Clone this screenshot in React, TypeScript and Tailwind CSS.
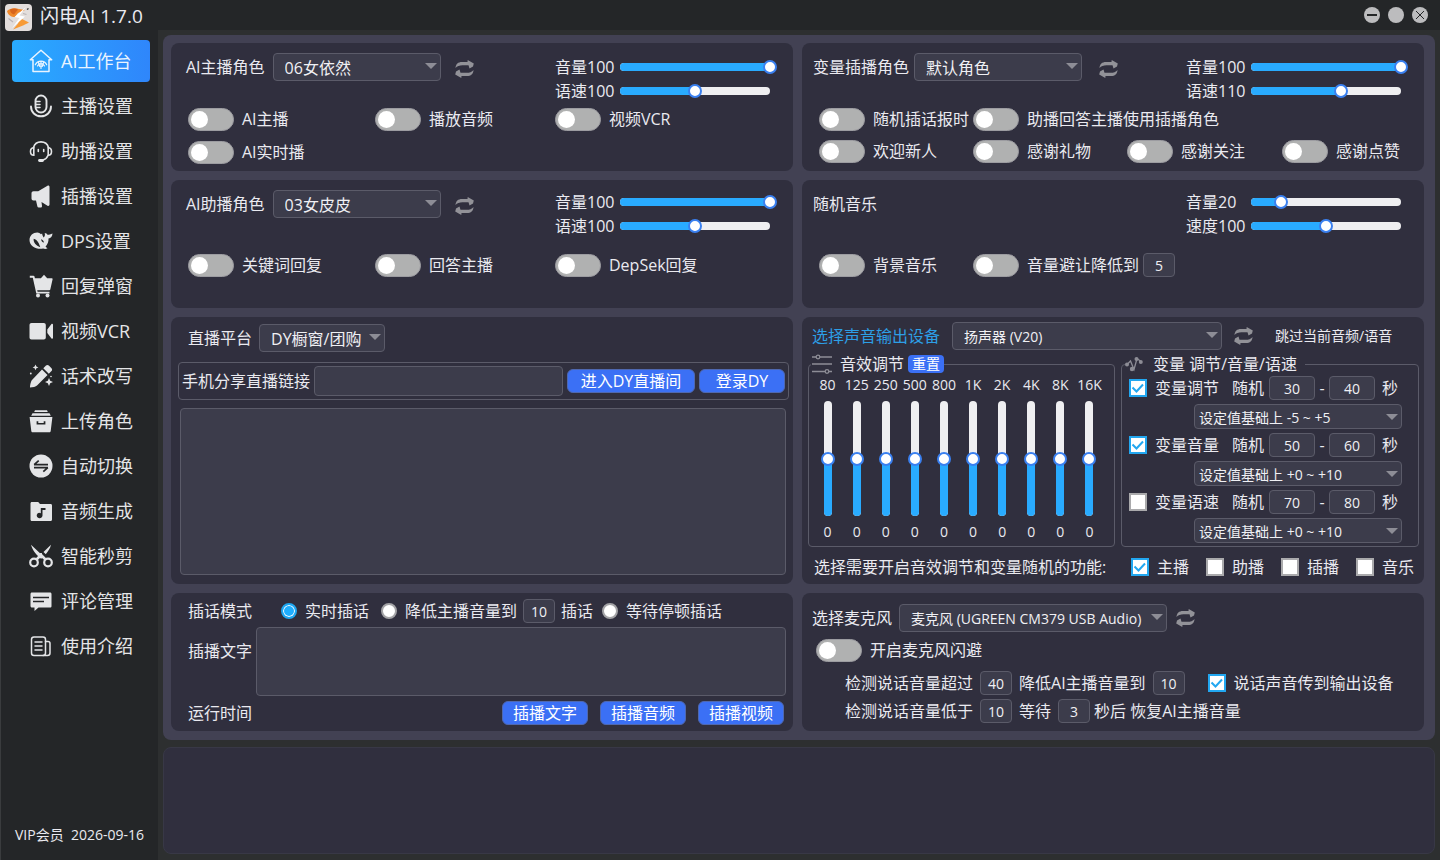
import { useId, useState } from 'react';
import type { ReactNode } from 'react';

const NAV: { name: string; icon: ReactNode }[] = [
  {
    name: 'AI工作台',
    icon: (
      <g fill="none" stroke="currentColor" strokeWidth="1.5" strokeLinejoin="round" strokeLinecap="round">
        <path d="M4 10.8H1.3L12 1.2l10.700 9.600H20V22.500H4z" />
        <path d="M6.300 15.800a6.200 6.200 0 0 1 11.400 0M8.500 17a3.800 3.800 0 0 1 7 0M12 12v7.500M9.300 13l1.500 4.500M14.700 13l-1.500 4.500" strokeWidth="1.200" />
      </g>
    ),
  },
  {
    name: '主播设置',
    icon: (
      <g fill="none" stroke="currentColor" strokeWidth="1.900" strokeLinecap="round">
        <rect x="6.500" y="1.500" width="11" height="17" rx="5.500" />
        <path d="M7 7.500h4M7 10.500h4M7 13.500h4" strokeWidth="1.500" />
        <path d="M2 12.500c0 5.500 4.300 9.800 10 9.800s10-4.300 10-9.800" />
      </g>
    ),
  },
  {
    name: '助播设置',
    icon: (
      <g fill="none" stroke="currentColor" strokeWidth="1.600" strokeLinecap="round">
        <path d="M4.500 8.500a7.800 7.800 0 0 1 15 0" />
        <path d="M4.800 8.800v7.400C2.800 16.200 1.500 15 1.500 12.500s1.300-3.700 3.300-3.700zM19.200 8.800v7.400c2 0 3.300-1.200 3.300-3.700s-1.300-3.700-3.300-3.700z" />
        <path d="M9.300 10.500v2M14.700 10.500v2" />
        <path d="M19 16.500c-1 2.500-2.800 4-5 4.600" />
        <path d="M10.500 21.500h3" strokeWidth="2.800" />
      </g>
    ),
  },
  {
    name: '插播设置',
    icon: (
      <path
        fill="currentColor"
        d="M2.500 9.300c0-1.300.8-2 2-2h4.700L18.500 1.800c1-.6 2 0 2 1.200v17.500c0 1.200-1 1.800-2 1.200L12.500 18l.5 4c.1.900-.4 1.500-1.200 1.500H9.700c-.7 0-1.100-.4-1.300-1.100L7 16.500H4.500c-1.200 0-2-.8-2-2z"
      />
    ),
  },
  {
    name: 'DPS设置',
    icon: (
      <path
        fill="currentColor"
        fillRule="evenodd"
        d="M.5 11C.5 6.500 4 3.500 8.300 3.500c1.700 0 2.500.8 3.600 1.700l1.200-.7c.2 1.500.6 2.600 1.600 3.900 1.200-1.200 1.500-2.700 1-4.400 1.400.2 2.200.9 2.800 1.700 1.500-.1 3.200-.4 5-1.300-.2 3-1.700 4.700-4 5.200.2 3.100-.8 5.700-3 8.100l2 1.600c-1.300.8-2.900.9-4.400.2C8.200 21 .5 17.500.5 11zm4.200-1.300c-.7 3.600 2.300 6.600 6.600 8.500-.9-2-1.600-5-4-7.100-.8-.7-1.700-1.100-2.600-1.400zm7.300.5c.2 1.500 1.300 3.100 3 3.300-.2-1.600-1.300-2.900-3-3.300z"
      />
    ),
  },
  {
    name: '回复弹窗',
    icon: (
      <g fill="currentColor">
        <path d="M.8 1.800h3.700c.5 0 .9.300 1 .8l.4 1.600h6L15 .8l3.200 3.400h4.500c.6 0 1 .5.9 1.100l-2.300 10.200c-.1.500-.5.800-1 .8H8.200l.4 1.400h11.900v1.700H7.300L3.800 3.700H.8z" />
        <circle cx="9" cy="21.500" r="2" />
        <circle cx="18.500" cy="21.500" r="2" />
      </g>
    ),
  },
  {
    name: '视频VCR',
    icon: <path fill="currentColor" d="M2.500 4h12.300c1.200 0 2 .8 2 2v12.500c0 1.200-.8 2-2 2H2.500c-1.200 0-2-.8-2-2V6c0-1.200.8-2 2-2zM18.300 10.500 22.500 5c.5-.6 1.500-.3 1.500.5v13.500c0 .8-1 1.100-1.500.5l-4.200-5.500z" />,
  },
  {
    name: '话术改写',
    icon: (
      <g fill="currentColor">
        <path d="M13 5.500 18.500 11 8 21.500c-1 1-4.500 2-7 2 0-2.500 1-6.500 2-7.500zM14.300 4.200 17 1.500c.8-.8 2-.8 2.800 0l2.700 2.700c.8.800.8 2 0 2.800l-2.700 2.700z" />
        <path d="m6.500.5.9 2 2 .9-2 .9-.9 2-.9-2-2-.9 2-.9zM20 14l1.200 2.800L24 18l-2.800 1.200L20 22l-1.200-2.800L16 18l2.800-1.200z" />
        <circle cx="1.800" cy="9.500" r=".9" />
        <circle cx="22" cy="12.500" r=".8" />
      </g>
    ),
  },
  {
    name: '上传角色',
    icon: (
      <g fill="currentColor">
        <path d="M6 1.300h12l.8 1.600H5.200zM3.500 4.200h17l1.300 2.600H2.200z" />
        <path fillRule="evenodd" d="M.6 8h22.800l-1.700 14c-.1.900-.6 1.300-1.400 1.300H3.700c-.8 0-1.300-.4-1.400-1.300zm7 4.300v3.200h8.800v-3.200h-1.700v1.600H9.300v-1.600z" />
      </g>
    ),
  },
  {
    name: '自动切换',
    icon: (
      <>
        <circle cx="12" cy="12" r="11.500" fill="currentColor" />
        <path d="M5 10.700h14M9.700 6.700 5.200 10.700M5 13.700h14M14.300 17.700l4.500-4" fill="none" stroke="#242628" strokeWidth="1.700" />
      </>
    ),
  },
  {
    name: '音频生成',
    icon: (
      <>
        <path fill="currentColor" d="M1.500 4.500c0-.9.500-1.500 1.400-1.500h6.300l1.800 2h10.600c.9 0 1.400.6 1.400 1.500v14c0 .9-.5 1.500-1.400 1.500H2.900c-.9 0-1.400-.6-1.400-1.500z" />
        <path fill="#242628" d="M11.800 9h4.700v2h-3v5.500a2.900 2.600 0 1 1-1.700-2.300z" />
      </>
    ),
  },
  {
    name: '智能秒剪',
    icon: (
      <g fill="none" stroke="currentColor" strokeWidth="2.200">
        <circle cx="5" cy="18.500" r="3.800" />
        <circle cx="19" cy="18.500" r="3.800" />
        <path d="M7.500 15.500 13 10M16.500 15.500 11 10" strokeWidth="2.600" />
        <path d="M2 .8 15 13l-3 1.800C7.500 11 3.500 6.500 2 .8zM22 .8 14.500 8l2.300 2.200C19 7.500 21.200 4.500 22 .8z" fill="currentColor" stroke="none" />
      </g>
    ),
  },
  {
    name: '评论管理',
    icon: (
      <>
        <path fill="currentColor" d="M3 3.500h18c1 0 1.500.6 1.500 1.500v12c0 1-.5 1.500-1.500 1.500H9.500L5.500 22v-3.500H3c-1 0-1.500-.6-1.500-1.500V5c0-.9.500-1.500 1.500-1.500z" />
        <path d="M4 8.500h16M4 12.500h11" stroke="#242628" strokeWidth="1.700" />
      </>
    ),
  },
  {
    name: '使用介绍',
    icon: (
      <g fill="none" stroke="currentColor" strokeWidth="1.500" strokeLinecap="round">
        <rect x="2.500" y="3" width="14" height="18.500" rx="2.500" />
        <path d="M6 8h7M6 12h7M6 16h7M16.500 7.500h2.500c1.300 0 2 .7 2 2v9.500c0 1.500-1 2.500-2.500 2.500H14" />
      </g>
    ),
  },
];

const BANDS = ['80', '125', '250', '500', '800', '1K', '2K', '4K', '8K', '16K'];

const VARIABLES = [
  { name: '变量调节', on: true, from: 30, to: 40, range: '设定值基础上 -5 ~ +5' },
  { name: '变量音量', on: true, from: 50, to: 60, range: '设定值基础上 +0 ~ +10' },
  { name: '变量语速', on: false, from: 70, to: 80, range: '设定值基础上 +0 ~ +10' },
];

const TARGETS = [
  { name: '主播', on: true },
  { name: '助播', on: false },
  { name: '插播', on: false },
  { name: '音乐', on: false },
];

function Panel({ className = '', children }: { className?: string; children: ReactNode }) {
  return <section className={`min-w-0 rounded-lg bg-[#302f3e] ${className}`}>{children}</section>;
}

function Toggle({ label, className = '' }: { label: string; className?: string }) {
  return (
    <label className={`flex items-center gap-2 ${className}`}>
      <input
        type="checkbox"
        role="switch"
        className="h-[23px] w-[46px] shrink-0 appearance-none rounded-full border border-[#9c9ca1] bg-[#b0b1b1] p-0.5 before:block before:size-[17px] before:rounded-full before:bg-white checked:bg-[#29abff] checked:before:ml-[23px]"
      />
      {label}
    </label>
  );
}

function Check({ label, defaultChecked }: { label: string; defaultChecked?: boolean }) {
  return (
    <label className="flex items-center gap-2">
      <span className="relative size-[18px] shrink-0">
        <input
          type="checkbox"
          defaultChecked={defaultChecked}
          className="peer block size-[18px] appearance-none border-2 border-[#aaaaac] bg-white checked:border-[#22a7f0]"
        />
        <svg viewBox="0 0 18 18" className="pointer-events-none absolute inset-0 hidden size-[18px] peer-checked:block">
          <path d="M3.500 8.500 7.500 12.500 14 5.500" fill="none" stroke="#22a7f0" strokeWidth="2" />
        </svg>
      </span>
      {label}
    </label>
  );
}

function Radio({ label, defaultChecked }: { label: string; defaultChecked?: boolean }) {
  return (
    <label className="flex items-center gap-2">
      <input
        type="radio"
        name="insert-mode"
        defaultChecked={defaultChecked}
        className="size-4 shrink-0 appearance-none rounded-full border-2 border-[#a3a3a6] bg-white checked:border-[#1ea6f0] checked:bg-[#1eaeff] checked:shadow-[inset_0_0_0_1px_#fff]"
      />
      {label}
    </label>
  );
}

type SelectProps = {
  id?: string;
  label?: string;
  value: string;
  className?: string;
  small?: boolean;
  tight?: boolean;
};

function Select({ id, label, value, className = '', small = false, tight = false }: SelectProps) {
  return (
    <span className={`relative block shrink-0 ${className}`}>
      <select
        id={id}
        aria-label={label}
        className={`block w-full appearance-none rounded border border-[#5b5b69] bg-[#3c3c4b] pt-0.5 text-[#f0f0f4] ${small ? 'text-sm' : 'text-base'} ${tight ? 'h-[25px] pl-1' : 'h-7 pl-[11px]'}`}
      >
        <option>{value}</option>
      </select>
      <svg viewBox="0 0 12 6" className="pointer-events-none absolute top-2.5 right-1 h-1.5 w-3">
        <path d="M0 0h12L6 6z" fill="#8d8d96" />
      </svg>
    </span>
  );
}

function NumberBox({ value, wide = false, label }: { value: number; wide?: boolean; label?: string }) {
  return (
    <input
      type="text"
      aria-label={label}
      defaultValue={value}
      className={`h-6 shrink-0 rounded border border-[#5b5b69] bg-[#3c3c4b] text-center text-sm text-[#f0f0f4] ${wide ? 'w-[46px]' : 'w-8'}`}
    />
  );
}

function Refresh({ className = '' }: { className?: string }) {
  return (
    <button type="button" aria-label="刷新" className={`shrink-0 ${className}`}>
      <svg viewBox="0 0 19 18" className="h-[18px] w-[19px]" fill="#929298">
        <path d="M.5 8C.8 4 3 2 7 2h5.500L12.700 0 18.800 3.500 18 6.500 14.500 8.500 13.500 5.200H7.500C4.500 5.200 2 6 .5 8z" />
        <path d="M.5 8C.8 4 3 2 7 2h5.500L12.700 0 18.800 3.500 18 6.500 14.500 8.500 13.500 5.200H7.500C4.500 5.200 2 6 .5 8z" transform="rotate(180 9.500 9)" />
      </svg>
    </button>
  );
}

function Slider({ label, initial, min = 0, max = 100 }: { label: string; initial: number; min?: number; max?: number }) {
  const [value, setValue] = useState(initial);
  const id = useId();

  return (
    <div className="flex h-6 items-center">
      <label htmlFor={id} className="w-[65px]">
        {label}
        {value}
      </label>
      <div className="relative h-2 w-[150px] rounded-full bg-[#efeff1]">
        <div className="h-2 rounded-full bg-[#29abff]" style={{ width: `${((value - min) / (max - min)) * 100}%` }} />
        <input
          id={id}
          type="range"
          min={min}
          max={max}
          value={value}
          onChange={(e) => setValue(Number(e.target.value))}
          className="absolute -top-[3px] -left-[7px] h-3.5 w-[164px] appearance-none bg-transparent [&::-webkit-slider-thumb]:size-3.5 [&::-webkit-slider-thumb]:appearance-none [&::-webkit-slider-thumb]:rounded-full [&::-webkit-slider-thumb]:border-2 [&::-webkit-slider-thumb]:border-[#3a80f0] [&::-webkit-slider-thumb]:bg-white"
        />
      </div>
    </div>
  );
}

function Band({ name }: { name: string }) {
  const [gain, setGain] = useState(0);
  const id = useId();

  return (
    <div className="flex flex-col items-center text-sm">
      <label htmlFor={id} className="leading-[22px]">{name}</label>
      <div className="relative mt-[5px] flex h-[115px] w-2 flex-col justify-end rounded-full bg-[#efeff1]">
        <div className="w-2 rounded-full bg-[#29abff]" style={{ height: `${((gain + 12) / 24) * 100}%` }} />
        <input
          id={id}
          type="range"
          min={-12}
          max={12}
          value={gain}
          onChange={(e) => setGain(Number(e.target.value))}
          className="absolute -top-[7px] -left-[3px] h-[129px] w-3.5 appearance-none bg-transparent [direction:rtl] [writing-mode:vertical-lr] [&::-webkit-slider-thumb]:size-3.5 [&::-webkit-slider-thumb]:appearance-none [&::-webkit-slider-thumb]:rounded-full [&::-webkit-slider-thumb]:border-2 [&::-webkit-slider-thumb]:border-[#3a80f0] [&::-webkit-slider-thumb]:bg-white"
        />
      </div>
      <output htmlFor={id} className="mt-1 leading-6">{gain}</output>
    </div>
  );
}

function BlueButton({ children, className = 'w-[86px]' }: { children: ReactNode; className?: string }) {
  return (
    <button type="button" className={`h-6 shrink-0 rounded-md border border-[#4f68b0] bg-[#3b70f5] leading-none text-white ${className}`}>
      {children}
    </button>
  );
}

function Sidebar() {
  const [active, setActive] = useState('AI工作台');

  return (
    <aside className="flex w-[158px] shrink-0 flex-col border-l border-[#3a3c3e] pt-1">
      <div className="flex items-start gap-2 pl-1">
        <svg viewBox="0 0 27 27" className="size-[27px] shrink-0">
          <rect width="27" height="27" rx="4" fill="#e3dedc" />
          <path d="M2 7c3-3 8-3.500 12-2l6 1-7 3-3 4C6 13 3 11 2 7z" fill="#f0892b" />
          <path d="M5 5.500c3-1.500 6-1 8 0l-4 5C6.500 10 5 8 5 5.500z" fill="#d8651c" />
          <path d="M15 14l9 4.500-6 3-10 4 5-6z" fill="#f79a35" />
          <path d="M21 3 9.500 13l5 1L7 24l13-11.500-5.500-1z" fill="#fff" />
          <path d="M3.500 14.500 8 18M18 9.500l3.500 1" stroke="#b9b3b5" strokeWidth="1.200" />
          <path d="M22 5.500l1.500-1" stroke="#333" strokeWidth="1.300" />
        </svg>
        <h1 className="text-[19px] leading-6 whitespace-nowrap">闪电AI 1.7.0</h1>
      </div>

      <nav className="mt-[9px] flex flex-col gap-[3px] pr-2 pl-[11px]">
        {NAV.map((item) => (
          <button
            key={item.name}
            type="button"
            onClick={() => setActive(item.name)}
            className={`flex h-[42px] items-center gap-2 rounded pl-[17px] text-lg whitespace-nowrap ${item.name === active ? 'bg-linear-to-r from-[#29abff] to-[#2f86fb] text-[#e9f4ff]' : 'text-[#e4e5e7]'}`}
          >
            <svg viewBox="0 0 24 24" className="size-6 shrink-0">{item.icon}</svg>
            {item.name}
          </button>
        ))}
      </nav>

      <p className="mt-auto pb-[13px] pl-3.5 text-sm leading-6 whitespace-pre">VIP会员  2026-09-16</p>
    </aside>
  );
}

function WindowControls() {
  return (
    <header className="flex h-[30px] shrink-0 items-center justify-end gap-2 pr-3">
      <button type="button" aria-label="最小化">
        <svg viewBox="0 0 16 16" className="size-4">
          <circle cx="8" cy="8" r="8" fill="#bcbcbe" />
          <path d="M3 8h10" stroke="#242628" strokeWidth="2" />
        </svg>
      </button>
      <button type="button" aria-label="最大化" className="size-4 rounded-full bg-[#bcbcbe]" />
      <button type="button" aria-label="关闭">
        <svg viewBox="0 0 16 16" className="size-4">
          <circle cx="8" cy="8" r="8" fill="#bcbcbe" />
          <path d="m4 4 8 8M12 4l-8 8" stroke="#242628" strokeWidth="1" />
        </svg>
      </button>
    </header>
  );
}

function SoundPanel() {
  return (
    <Panel className="pt-[5px] pr-[5px] pb-[5px] pl-1.5">
      <div className="flex items-center pl-1">
        <label htmlFor="output" className="text-[#2d9fe6]">选择声音输出设备</label>
        <Select id="output" value="扬声器 (V20)" small className="mx-3 w-[270px]" />
        <Refresh />
        <button type="button" className="ml-[22px] text-sm">跳过当前音频/语音</button>
      </div>

      <div className="mt-1 grid grid-cols-[307fr_298fr] gap-1.5">
        <fieldset className="min-w-0 rounded border border-[#5b5b69] pr-[10px] pl-1">
          <legend className="-ml-0.5 flex h-5 items-center pl-px">
            <svg viewBox="0 0 20 20" className="h-5 w-5" fill="none" stroke="#8d8d96" strokeWidth="1.300">
              <path d="M0 3h4M8 3h12M0 10h20M0 17.500h13M17 17.500h3" />
              <circle cx="6" cy="3" r="1.800" />
              <circle cx="15" cy="17.500" r="1.800" />
            </svg>
            <span className="ml-2">音效调节</span>
            <button type="button" className="ml-1 h-[18px] w-9 rounded bg-[#3b70f5] text-sm leading-none text-white">重置</button>
          </legend>
          <div className="grid grid-cols-10">
            {BANDS.map((name) => (
              <Band key={name} name={name} />
            ))}
          </div>
        </fieldset>

        <fieldset className="min-w-0 rounded border border-[#5b5b69] pr-4 pb-[3px] pl-[7px]">
          <legend className="-ml-1 flex h-5 items-center pr-2">
            <svg viewBox="0 0 18 16" className="h-4 w-[18px]" fill="#8d8d96">
              <path d="M2 8.500 5.500 5 9 13.500 12 2.500 16 5.500" fill="none" stroke="#8d8d96" strokeWidth="1.300" />
              <circle cx="2" cy="8.500" r="2" />
              <circle cx="7" cy="13" r="2.200" />
              <circle cx="11.500" cy="3" r="2" />
              <circle cx="15.800" cy="6" r="2" />
            </svg>
            <span className="ml-2.5">变量 调节/音量/语速</span>
          </legend>
          <div className="flex flex-col gap-1 pt-0.5">
            {VARIABLES.map((v) => (
              <div key={v.name} className="flex flex-col gap-1">
                <div className="flex h-6 items-center">
                  <Check label={v.name} defaultChecked={v.on} />
                  <span className="mr-[5px] ml-[13px]">随机</span>
                  <NumberBox wide value={v.from} label={`${v.name}最小秒数`} />
                  <span className="w-3.5 text-center">-</span>
                  <NumberBox wide value={v.to} label={`${v.name}最大秒数`} />
                  <span className="ml-[7px]">秒</span>
                </div>
                <div className="flex justify-end">
                  <Select label={`${v.name}范围`} value={v.range} small tight className="w-[208px]" />
                </div>
              </div>
            ))}
          </div>
        </fieldset>
      </div>

      <div className="mt-2 flex items-center justify-between pr-[5px] pl-1.5">
        <span>选择需要开启音效调节和变量随机的功能:</span>
        <div className="flex gap-[17px]">
          {TARGETS.map((t) => (
            <Check key={t.name} label={t.name} defaultChecked={t.on} />
          ))}
        </div>
      </div>
    </Panel>
  );
}

export default function App() {
  return (
    <div className="flex min-h-screen bg-[#242628] font-['Open_Sans','Noto_Sans_CJK_SC',sans-serif] text-base leading-6 whitespace-nowrap text-[#eaeaf0]">
      <Sidebar />

      <div className="flex min-w-0 flex-1 flex-col">
        <WindowControls />

        <main className="flex flex-1 flex-col gap-[7px] bg-[#2d2f30] px-[5px] pt-[5px] pb-1.5">
          <div className="grid grid-cols-2 gap-[9px] rounded-lg bg-[#424153] pt-2 pr-[11px] pb-[9px] pl-2">
            {/* AI anchor */}
            <Panel className="pt-2.5 pb-[7px]">
              <div className="flex items-start pr-[23px] pl-[15px]">
                <label htmlFor="anchor" className="pt-0.5">AI主播角色</label>
                <Select id="anchor" value="06女依然" className="mr-3.5 ml-2 w-[168px]" />
                <Refresh className="pt-[7px]" />
                <div className="ml-auto pt-0.5">
                  <Slider label="音量" initial={100} />
                  <Slider label="语速" initial={100} min={50} max={150} />
                </div>
              </div>
              <div className="mt-1 grid grid-cols-[187fr_180fr_238fr] gap-y-[9px] pl-[17px]">
                <Toggle label="AI主播" />
                <Toggle label="播放音频" />
                <Toggle label="视频VCR" />
                <Toggle label="AI实时播" />
              </div>
            </Panel>

            {/* Interjection voice */}
            <Panel className="pt-2.5 pb-[7px]">
              <div className="flex items-start pr-[23px] pl-[11px]">
                <label htmlFor="interject" className="pt-0.5">变量插播角色</label>
                <Select id="interject" value="默认角色" className="mr-[17px] ml-[5px] w-[168px]" />
                <Refresh className="pt-[7px]" />
                <div className="ml-auto pt-0.5">
                  <Slider label="音量" initial={100} />
                  <Slider label="语速" initial={110} min={50} max={150} />
                </div>
              </div>
              <div className="mt-1 grid grid-cols-[154fr_154fr_155fr_142fr] gap-y-2 pl-[17px]">
                <Toggle label="随机插话报时" />
                <Toggle label="助播回答主播使用插播角色" className="col-span-3" />
                <Toggle label="欢迎新人" />
                <Toggle label="感谢礼物" />
                <Toggle label="感谢关注" />
                <Toggle label="感谢点赞" />
              </div>
            </Panel>

            {/* AI assistant */}
            <Panel className="pt-2.5 pb-[31px]">
              <div className="flex items-start pr-[23px] pl-[15px]">
                <label htmlFor="assistant" className="pt-0.5">AI助播角色</label>
                <Select id="assistant" value="03女皮皮" className="mr-3.5 ml-2 w-[168px]" />
                <Refresh className="pt-[7px]" />
                <div className="ml-auto">
                  <Slider label="音量" initial={100} />
                  <Slider label="语速" initial={100} min={50} max={150} />
                </div>
              </div>
              <div className="mt-[15px] grid grid-cols-[187fr_180fr_238fr] pl-[17px]">
                <Toggle label="关键词回复" />
                <Toggle label="回答主播" />
                <Toggle label="DepSek回复" />
              </div>
            </Panel>

            {/* Music */}
            <Panel className="pt-2.5 pb-[31px]">
              <div className="flex items-start justify-between pr-[23px] pl-[11px]">
                <h2 className="pt-0.5">随机音乐</h2>
                <div>
                  <Slider label="音量" initial={20} />
                  <Slider label="速度" initial={100} min={50} max={150} />
                </div>
              </div>
              <div className="mt-[15px] grid grid-cols-[154fr_451fr] pl-[17px]">
                <Toggle label="背景音乐" />
                <div className="flex items-center gap-1">
                  <Toggle label="音量避让降低到" />
                  <NumberBox value={5} label="避让音量" />
                </div>
              </div>
            </Panel>

            {/* Live platform */}
            <Panel className="flex flex-col pt-[7px] pr-1 pb-[9px] pl-[7px]">
              <div className="flex items-center gap-[7px] pl-2.5">
                <label htmlFor="platform">直播平台</label>
                <Select id="platform" value="DY橱窗/团购" className="w-[126px]" />
              </div>
              <div className="mt-2.5 flex items-center gap-1 rounded border border-[#5b5b69] p-[3px]">
                <label htmlFor="link">手机分享直播链接</label>
                <input id="link" type="text" className="h-[30px] min-w-0 flex-1 rounded border border-[#5b5b69] bg-[#3c3c4b] px-2" />
                <BlueButton className="w-32">进入DY直播间</BlueButton>
                <BlueButton>登录DY</BlueButton>
              </div>
              <textarea aria-label="直播消息" className="mt-2 mr-[3px] ml-0.5 min-h-40 flex-1 resize-none rounded border border-[#5b5b69] bg-[#3c3c4b] p-2" />
            </Panel>

            <SoundPanel />

            {/* Insert mode */}
            <Panel className="pt-1.5 pr-[7px] pb-1.5 pl-[17px]">
              <div className="flex items-center">
                <span>插话模式</span>
                <div className="ml-[29px] flex items-center gap-3">
                  <Radio label="实时插话" defaultChecked />
                  <Radio label="降低主播音量到" />
                </div>
                <label className="mr-[9px] ml-1.5 flex items-center gap-1.5">
                  <NumberBox value={10} />
                  插话
                </label>
                <Radio label="等待停顿插话" />
              </div>
              <div className="mt-1 flex gap-1">
                <label htmlFor="insert-text" className="pt-3">插播文字</label>
                <textarea id="insert-text" className="h-[69px] min-w-0 flex-1 resize-none rounded border border-[#5b5b69] bg-[#3c3c4b] p-2" />
              </div>
              <div className="mt-[5px] flex items-center gap-3 pr-0.5">
                <span className="mr-auto">运行时间</span>
                <BlueButton>插播文字</BlueButton>
                <BlueButton>插播音频</BlueButton>
                <BlueButton>插播视频</BlueButton>
              </div>
            </Panel>

            {/* Microphone */}
            <Panel className="pt-[11px] pb-2 pl-2.5">
              <div className="flex items-center">
                <label htmlFor="mic">选择麦克风</label>
                <Select id="mic" value="麦克风 (UGREEN CM379 USB Audio)" small className="mr-[9px] ml-[7px] w-[268px]" />
                <Refresh />
              </div>
              <Toggle label="开启麦克风闪避" className="mt-1.5 ml-1" />
              <div className="mt-[9px] flex items-center gap-[7px] pl-[33px]">
                <label className="flex items-center gap-[7px]">
                  检测说话音量超过
                  <NumberBox value={40} />
                </label>
                <label className="mr-4 flex items-center gap-[7px]">
                  降低AI主播音量到
                  <NumberBox value={10} />
                </label>
                <Check label="说话声音传到输出设备" defaultChecked />
              </div>
              <div className="mt-1 flex items-center gap-[7px] pl-[33px]">
                <label className="flex items-center gap-[7px]">
                  检测说话音量低于
                  <NumberBox value={10} />
                </label>
                <div className="flex items-center gap-1">
                  <label className="flex items-center gap-[7px]">
                    等待
                    <NumberBox value={3} />
                  </label>
                  <span>秒后 恢复AI主播音量</span>
                </div>
              </div>
            </Panel>
          </div>

          <section className="flex-1 rounded-lg border border-[#383846] bg-[#302f3e]" />
        </main>
      </div>
    </div>
  );
}
